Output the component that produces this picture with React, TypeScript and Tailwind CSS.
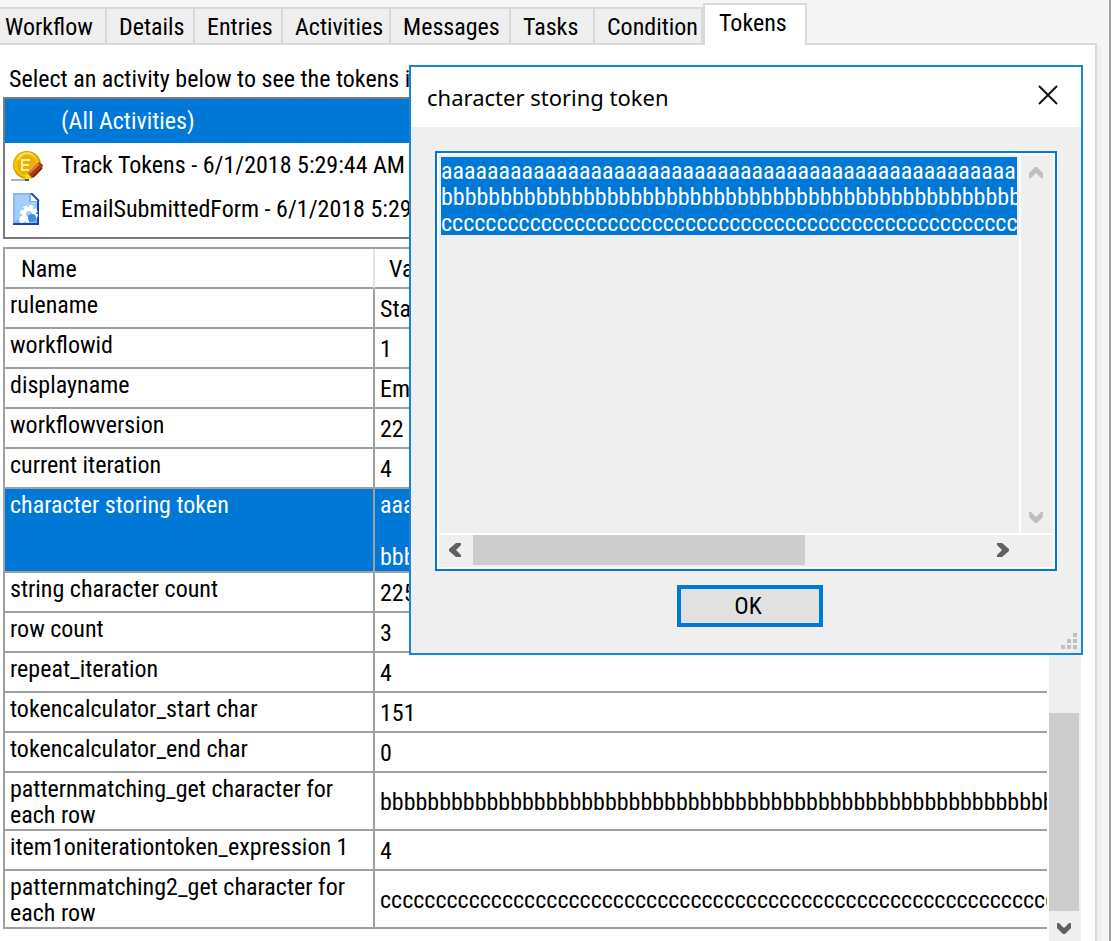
import { useState } from "react";
import clsx from "clsx";

const TABS: [string, string][] = [
  ["Workflow", "w-[107px] pl-[5px]"],
  ["Details", "w-[88px] pl-3"],
  ["Entries", "w-[88px] pl-3"],
  ["Activities", "w-[108px] pl-3"],
  ["Messages", "w-[120px] pl-3"],
  ["Tasks", "w-[84px] pl-3"],
  ["Condition", "w-[108px] pl-3"],
  ["Tokens", "w-[104px] pl-3.5"],
];

const CHARS = ["a", "b", "c"].map((c) => c.repeat(75));

const TOKENS: { name: string; value: string }[] = [
  { name: "rulename", value: "Starting Rule" },
  { name: "workflowid", value: "1" },
  { name: "displayname", value: "EmailSubmittedForm" },
  { name: "workflowversion", value: "22" },
  { name: "current iteration", value: "4" },
  { name: "character storing token", value: CHARS[0] + "\n\n" + CHARS[1] },
  { name: "string character count", value: "225" },
  { name: "row count", value: "3" },
  { name: "repeat_iteration", value: "4" },
  { name: "tokencalculator_start char", value: "151" },
  { name: "tokencalculator_end char", value: "0" },
  { name: "patternmatching_get character for each row", value: CHARS[1] },
  { name: "item1oniterationtoken_expression 1", value: "4" },
  { name: "patternmatching2_get character for each row", value: CHARS[2] },
];

function TokenIcon() {
  return (
    <svg width="32" height="32" viewBox="0 0 32 32" aria-hidden="true">
      <circle cx="16" cy="16" r="14" fill="#d99b00" />
      <circle cx="15.5" cy="15.5" r="12.5" fill="#f6c800" />
      <circle cx="16" cy="16" r="10" fill="#e8b10a" />
      <path d="M7 11a10 10 0 0 1 15-5" fill="none" stroke="#fbe04a" strokeWidth="2" />
      <path d="M19 11h-8v10h7M11 16h7" fill="none" stroke="#fff09a" strokeWidth="2" />
      <path d="M0 31h18" stroke="#b4b4b4" strokeWidth="2" />
      <path d="M14 31l1-7 6 5z" fill="#f2e30c" />
      <path d="M14 31h4" stroke="#555" strokeWidth="2" />
      <path d="M17 24L28 13l4 3-1 4-10 9z" fill="#a63a12" />
      <path d="M18 24l10-9" stroke="#e8794a" strokeWidth="2" />
      <path d="M22 28l9-9" stroke="#6d1f08" strokeWidth="1.5" />
    </svg>
  );
}

function FormIcon() {
  return (
    <svg width="32" height="32" viewBox="0 0 32 32" aria-hidden="true">
      <path d="M2 0h18l8 8v24H2z" fill="#7ab4f7" />
      <path d="M4 2h14v7h8v9L4 28z" fill="#a3cdfc" />
      <path d="M2 0h2v32H2zM2 0h18v2H2z" fill="#8ab6f5" />
      <path d="M20 0l8 8h-8z" fill="#fff" />
      <path d="M20 0l8 8" stroke="#1a4fa8" strokeWidth="2" />
      <path d="M27 8v23H2" fill="none" stroke="#1448a8" strokeWidth="2" />
      <circle cx="18" cy="21" r="7" fill="none" stroke="#fff" strokeWidth="4" strokeDasharray="3.6 1.9" />
      <circle cx="18" cy="21" r="5" fill="none" stroke="#fff" strokeWidth="4" />
      <circle cx="11" cy="27" r="3" fill="#fff" />
      <circle cx="21" cy="25" r="4" fill="#3f8fe8" />
    </svg>
  );
}

const ARROWS = {
  up: "M0 11V6L6 0h2l6 6v5h-2L7 6 2 11z",
  down: "M0 1v5l6 6h2l6-6V1h-2L7 6 2 1z",
  left: "M12 0H7L0 6v2l7 6h5v-2L7 7l5-5z",
  right: "M0 0h5l7 6v2l-7 6H0v-2l5-5-5-5z",
};

function ArrowButton({ dir, label, className }: { dir: keyof typeof ARROWS; label: string; className: string }) {
  const flat = dir === "up" || dir === "down";
  return (
    <button aria-label={label} className={clsx("flex shrink-0 items-center justify-center", className)}>
      <svg width={flat ? 14 : 12} height={flat ? 12 : 14} fill="currentColor" aria-hidden="true">
        <path d={ARROWS[dir]} />
      </svg>
    </button>
  );
}

function TokenDialog({ onClose }: { onClose: () => void }) {
  return (
    <div
      role="dialog"
      aria-label="character storing token"
      className="absolute left-[409px] top-[65px] flex h-[590px] w-[674px] flex-col border-2 border-[#1a84da] bg-[#efefef]"
    >
      <div className="flex h-[60px] shrink-0 items-center justify-between bg-white pl-4 pr-[23px]">
        <h2 className="font-['Noto_Sans',sans-serif] text-[22px]">character storing token</h2>
        <button aria-label="Close" onClick={onClose} className="pb-1">
          <svg width="20" height="20" stroke="#111" strokeWidth="2" aria-hidden="true">
            <path d="M1 1l18 18M19 1L1 19" />
          </svg>
        </button>
      </div>

      <div className="mx-6 mt-6 flex min-h-0 flex-1 flex-col border-2 border-[#0078d7] bg-white p-0.5">
        <div className="flex min-h-0 flex-1">
          <div className="min-w-0 flex-1 bg-[#efefef] px-0.5 pt-0.5">
            <textarea
              aria-label="Token value"
              readOnly
              wrap="off"
              rows={3}
              value={CHARS.join("\n")}
              className="block h-[78px] w-full resize-none overflow-hidden bg-[#0078d7] pt-px leading-[26px] text-white outline-none"
            />
          </div>
          <div className="ml-0.5 flex w-8 flex-col justify-between bg-[#efefef] pr-0.5 text-[#bfbfbf]">
            <ArrowButton dir="up" label="Scroll up" className="h-9" />
            <ArrowButton dir="down" label="Scroll down" className="h-8" />
          </div>
        </div>
        <div className="mt-0.5 flex h-8 shrink-0 items-start bg-[#efefef] pr-8 text-[#606060]">
          <ArrowButton dir="left" label="Scroll left" className="h-[30px] w-[34px] pr-0.5" />
          <div className="h-[30px] w-[332px] bg-[#cdcdcd]" />
          <ArrowButton dir="right" label="Scroll right" className="ml-auto h-[30px] w-9" />
        </div>
      </div>

      <div className="relative flex h-[82px] shrink-0 items-start justify-center pl-2 pt-3.5">
        <button
          onClick={onClose}
          className="h-[42px] w-[146px] border-4 border-[#0078d7] bg-[#e1e1e1] pr-1 leading-[34px]"
        >
          OK
        </button>
        <svg className="absolute bottom-1 right-1" width="16" height="16" fill="#bfbfbf" aria-hidden="true">
          <path d="M12 0h4v4h-4zM6 6h4v4H6zM12 6h4v4h-4zM0 12h4v4H0zM6 12h4v4H6zM12 12h4v4h-4z" />
        </svg>
      </div>
    </div>
  );
}

export default function App() {
  const [tab, setTab] = useState("Tokens");
  const [selected, setSelected] = useState("character storing token");
  const [open, setOpen] = useState(true);

  return (
    <div className="relative flex h-screen overflow-hidden bg-white pr-[7px] font-['Roboto_Condensed','Liberation_Sans',sans-serif] text-2xl leading-[26px] text-black">
      <div className="flex min-w-0 flex-1 flex-col border-r-2 border-[#a0a0a0] bg-[#f5f5f5] pr-2">
        <div role="tablist" className="flex h-[45px] shrink-0 items-end">
          {TABS.map(([name, size]) => (
            <button
              key={name}
              role="tab"
              aria-selected={tab === name}
              onClick={() => setTab(name)}
              className={clsx(
                "flex shrink-0 items-start border-r-2 border-t-2 border-[#d9d9d9] pt-[5px]",
                tab === name ? "h-[42px] border-l-2 bg-white" : "h-[38px] border-b-2 bg-[#efefef]",
                size,
              )}
            >
              {name}
            </button>
          ))}
          <div className="mr-1 flex-1 border-b-2 border-[#d9d9d9]" />
        </div>

        <div className="flex min-h-0 flex-1 bg-[#efefef] pr-1">
          <div className="flex min-w-0 flex-1 flex-col border-r-2 border-[#d9d9d9] bg-white pl-[3px] pr-3.5">
            <p id="activities" className="shrink-0 pl-1.5 pt-[21px]">
              Select an activity below to see the tokens in use
            </p>
            <ul
              role="listbox"
              aria-labelledby="activities"
              className="mt-[5px] shrink-0 border-2 border-[#7a7a7a] pb-1.5"
            >
              <li role="option" aria-selected="true" className="flex h-11 items-center bg-[#0078d7] pl-14 text-white">
                (All Activities)
              </li>
              <li role="option" aria-selected="false" className="flex h-11 items-center gap-[18px] pl-1.5">
                <TokenIcon />
                Track Tokens - 6/1/2018 5:29:44 AM
              </li>
              <li role="option" aria-selected="false" className="flex h-11 items-center gap-[18px] pl-1.5">
                <FormIcon />
                EmailSubmittedForm - 6/1/2018 5:29:40 AM
              </li>
            </ul>

            {/* Token grid */}
            <div className="mt-2 flex min-h-0 flex-1 border-t-2 border-[#a0a0a0]">
              <div className="min-w-0 flex-1">
                <table className="w-full table-fixed border-separate border-spacing-0 border-l-2 border-[#a0a0a0] text-left">
                  <thead>
                    <tr className="h-10">
                      <th className="w-[370px] border-b-2 border-r-2 border-b-[#a0a0a0] border-r-[#e3e3e3] pl-4 pt-0.5 font-normal">
                        Name
                      </th>
                      <th className="border-b-2 border-[#a0a0a0] pl-3.5 pt-0.5 font-normal">Value</th>
                    </tr>
                  </thead>
                  <tbody>
                    {TOKENS.map(({ name, value }) => (
                      <tr
                        key={name}
                        onClick={() => setSelected(name)}
                        className={clsx("h-10", selected === name && "bg-[#0078d7] text-white")}
                      >
                        <td className="border-b-2 border-r-2 border-[#a0a0a0] pb-px pl-[5px] pr-5 pt-[3px] align-top">
                          {name}
                        </td>
                        <td className="overflow-hidden whitespace-pre border-b-2 border-[#a0a0a0] pb-px pl-[5px] pt-[3px] align-middle">
                          {value}
                        </td>
                      </tr>
                    ))}
                  </tbody>
                </table>
              </div>
              <div className="ml-0.5 flex w-8 flex-col justify-end bg-[#efefef] pr-0.5 text-[#606060]">
                <div className="h-[198px] shrink-0 bg-[#cdcdcd]" />
                <ArrowButton dir="down" label="Scroll down" className="h-[30px] pt-1" />
              </div>
            </div>
          </div>
        </div>
      </div>

      {open && <TokenDialog onClose={() => setOpen(false)} />}
    </div>
  );
}
